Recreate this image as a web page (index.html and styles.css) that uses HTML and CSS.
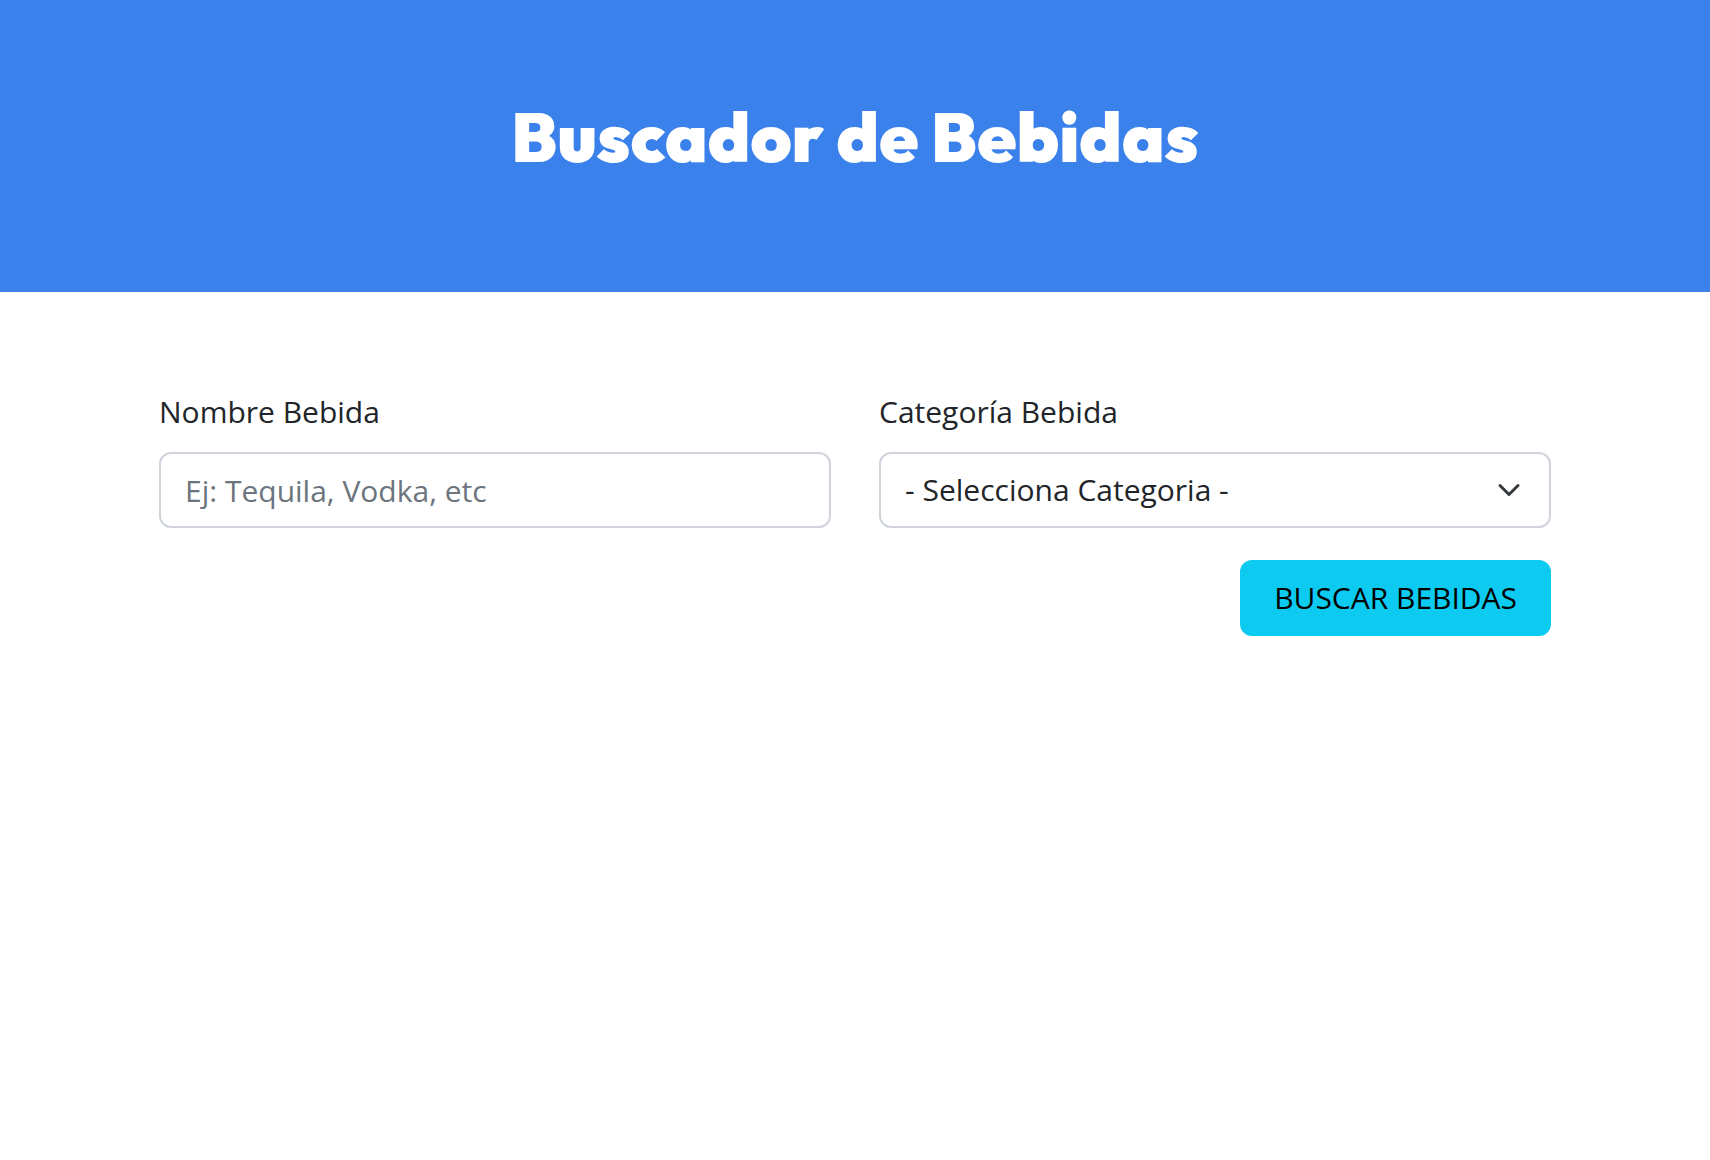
FILE: index.html
```html
<!DOCTYPE html>
<html lang="es">
<head>
  <meta charset="UTF-8">
  <meta name="viewport" content="width=device-width, initial-scale=1">
  <title>Buscador de Bebidas</title>
  <link rel="stylesheet" href="styles.css">
</head>
<body>
  <header class="header">
    <h1 class="header-title">Buscador de Bebidas</h1>
  </header>
  <main class="container">
    <form class="search-form">
      <div class="field">
        <label class="label" for="nombre">Nombre Bebida</label>
        <input class="control" id="nombre" name="nombre" type="text" placeholder="Ej: Tequila, Vodka, etc">
      </div>
      <div class="field">
        <label class="label" for="categoria">Categoría Bebida</label>
        <select class="control select" id="categoria" name="categoria">
          <option value="">- Selecciona Categoria -</option>
        </select>
      </div>
      <button class="submit" type="submit">Buscar Bebidas</button>
    </form>
  </main>
</body>
</html>
```
FILE: styles.css
```css
*,
*::before,
*::after {
  box-sizing: border-box;
}

body {
  margin: 0;
  background: #fff;
  color: #212529;
  font-family: "Segoe UI", "Open Sans", "Noto Sans", sans-serif;
  font-size: 30px;
  line-height: 48px;
}

.header {
  padding: 96px 24px 116px;
  background: #3a81eb;
}

.header-title {
  margin: 0;
  color: #fff;
  font-family: Outfit, Lato, sans-serif;
  font-size: 70px;
  font-weight: 900;
  line-height: 80px;
  text-align: center;
}

.container {
  max-width: 1440px;
  margin: 0 auto;
  padding: 96px 24px;
}

.search-form {
  display: grid;
  grid-template-columns: 1fr 1fr;
  gap: 32px 48px;
}

.field {
  display: flex;
  flex-direction: column;
  gap: 16px;
  min-width: 0;
}

.control {
  width: 100%;
  height: 76px;
  padding: 12px 24px;
  border: 2px solid #ced4da;
  border-radius: 12px;
  background-color: #fff;
  color: inherit;
  font: inherit;
  appearance: none;
}

.control::placeholder {
  color: #6c757d;
  opacity: 1;
}

.select {
  padding-right: 72px;
  background-image: url("data:image/svg+xml,%3Csvg xmlns='http://www.w3.org/2000/svg' viewBox='0 0 16 16'%3E%3Cpath fill='none' stroke='%23343a40' stroke-linecap='round' stroke-linejoin='round' stroke-width='2' d='m2 5 6 6 6-6'/%3E%3C/svg%3E");
  background-position: right 24px center;
  background-repeat: no-repeat;
  background-size: 32px 24px;
}

.submit {
  grid-column: 2;
  justify-self: end;
  padding: 12px 32px;
  border: 2px solid #0dcaf0;
  border-radius: 12px;
  background: #0dcaf0;
  color: #000;
  font: inherit;
  text-transform: uppercase;
  cursor: pointer;
}
```
